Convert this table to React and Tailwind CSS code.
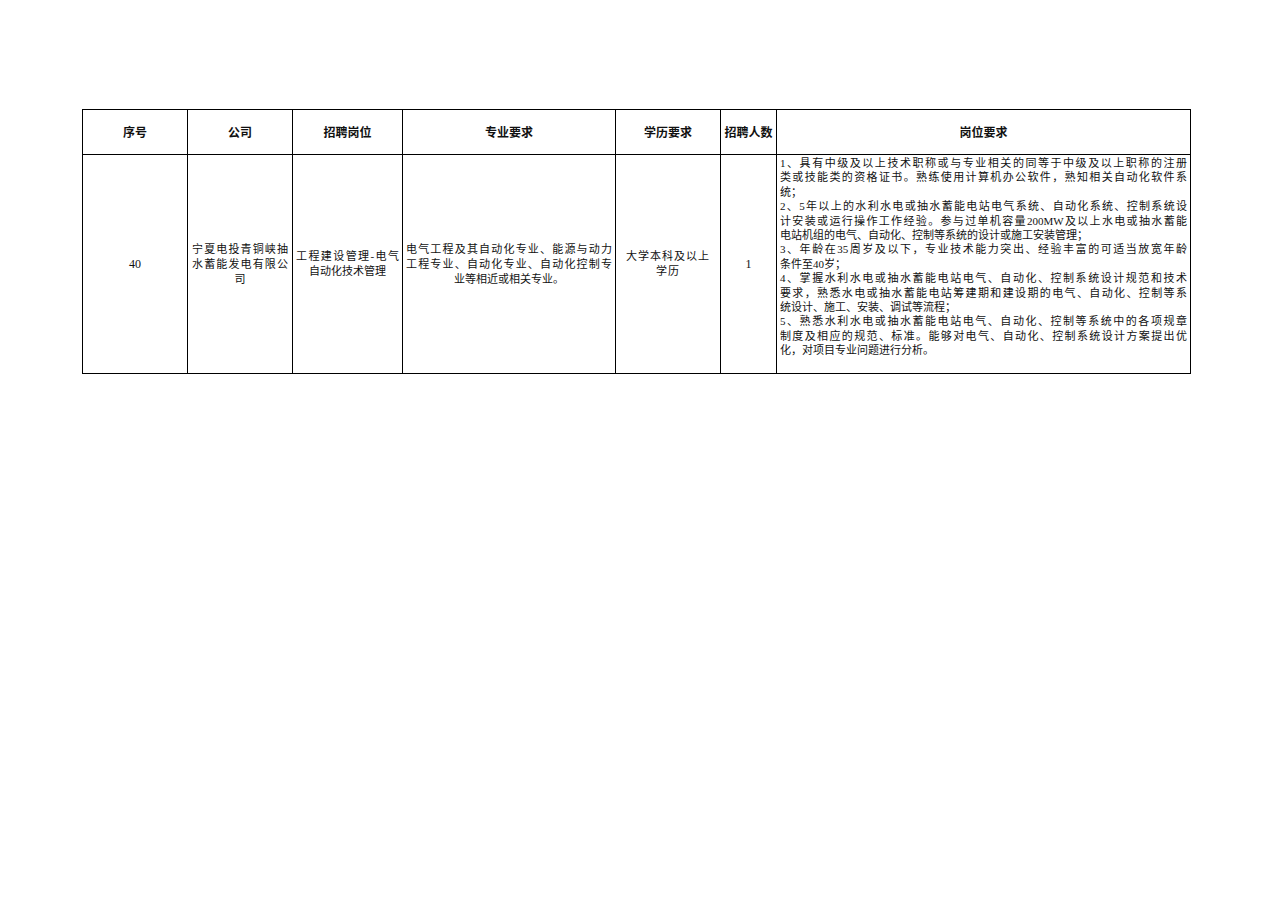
const cjk = {
  fontFamily: '"Liberation Serif", "Noto Sans CJK SC", serif',
};

const headers = ["序号", "公司", "招聘岗位", "专业要求", "学历要求", "招聘人数", "岗位要求"];
const widths = ["w-[105px]", "w-[105px]", "w-[110px]", "w-[213px]", "w-[105px]", "w-[56px]", "w-[414px]"];

// each entry: [text, justified]
const duty = [
  ["1、具有中级及以上技术职称或与专业相关的同等于中级及以上职称的注册", true],
  ["类或技能类的资格证书。熟练使用计算机办公软件，熟知相关自动化软件系", true],
  ["统；", false],
  ["2、5年以上的水利水电或抽水蓄能电站电气系统、自动化系统、控制系统设", true],
  ["计安装或运行操作工作经验。参与过单机容量200MW及以上水电或抽水蓄能", true],
  ["电站机组的电气、自动化、控制等系统的设计或施工安装管理；", false],
  ["3、年龄在35周岁及以下，专业技术能力突出、经验丰富的可适当放宽年龄", true],
  ["条件至40岁；", false],
  ["4、掌握水利水电或抽水蓄能电站电气、自动化、控制系统设计规范和技术", true],
  ["要求，熟悉水电或抽水蓄能电站筹建期和建设期的电气、自动化、控制等系", true],
  ["统设计、施工、安装、调试等流程；", false],
  ["5、熟悉水利水电或抽水蓄能电站电气、自动化、控制等系统中的各项规章", true],
  ["制度及相应的规范、标准。能够对电气、自动化、控制系统设计方案提出优", true],
  ["化，对项目专业问题进行分析。", false],
];

const Lines = ({ lines, just = [] }) => (
  <div className="leading-[15px]">
    {lines.map((l, i) => (
      <div
        key={i}
        className={
          just[i]
            ? "whitespace-nowrap text-justify [text-align-last:justify]"
            : "whitespace-nowrap text-center"
        }
      >
        {l}
      </div>
    ))}
  </div>
);

export default function App() {
  return (
    <div className="min-h-[905px] w-[1280px] bg-white pt-[109px] pl-[82px]" style={cjk}>
      <table className="table-fixed border-collapse border-[1.5px] border-black text-[11px] text-[#111]">
        <colgroup>
          {widths.map((w, i) => (
            <col key={i} className={w} />
          ))}
        </colgroup>
        <thead>
          <tr className="h-[45px]">
            {headers.map((h) => (
              <th
                key={h}
                className="border border-black text-center align-middle text-[12px] font-bold"
                style={{ fontFamily: '"Noto Sans CJK SC", sans-serif' }}
              >
                {h}
              </th>
            ))}
          </tr>
        </thead>
        <tbody>
          <tr className="h-[219px]">
            <td className="border border-black text-center align-middle text-[12px]">40</td>
            <td className="border border-black px-[4px] align-middle">
              <Lines lines={["宁夏电投青铜峡抽", "水蓄能发电有限公", "司"]} just={[true, true]} />
            </td>
            <td className="border border-black px-[3px] align-middle">
              <Lines lines={["工程建设管理-电气", "自动化技术管理"]} just={[true]} />
            </td>
            <td className="border border-black px-[3px] align-middle">
              <Lines
                lines={["电气工程及其自动化专业、能源与动力", "工程专业、自动化专业、自动化控制专", "业等相近或相关专业。"]}
                just={[true, true]}
              />
            </td>
            <td className="border border-black px-[3px] align-middle tracking-[1px]">
              <Lines lines={["大学本科及以上", "学历"]} />
            </td>
            <td className="border border-black text-center align-middle text-[12px]">1</td>
            <td className="border border-black px-[3px] pt-[1px] align-top">
              <div className="leading-[14.4px]">
                {duty.map(([t, j], i) => (
                  <div
                    key={i}
                    className={
                      j
                        ? "whitespace-nowrap text-justify [text-align-last:justify]"
                        : "whitespace-nowrap text-left"
                    }
                  >
                    {t}
                  </div>
                ))}
              </div>
            </td>
          </tr>
        </tbody>
      </table>
    </div>
  );
}
